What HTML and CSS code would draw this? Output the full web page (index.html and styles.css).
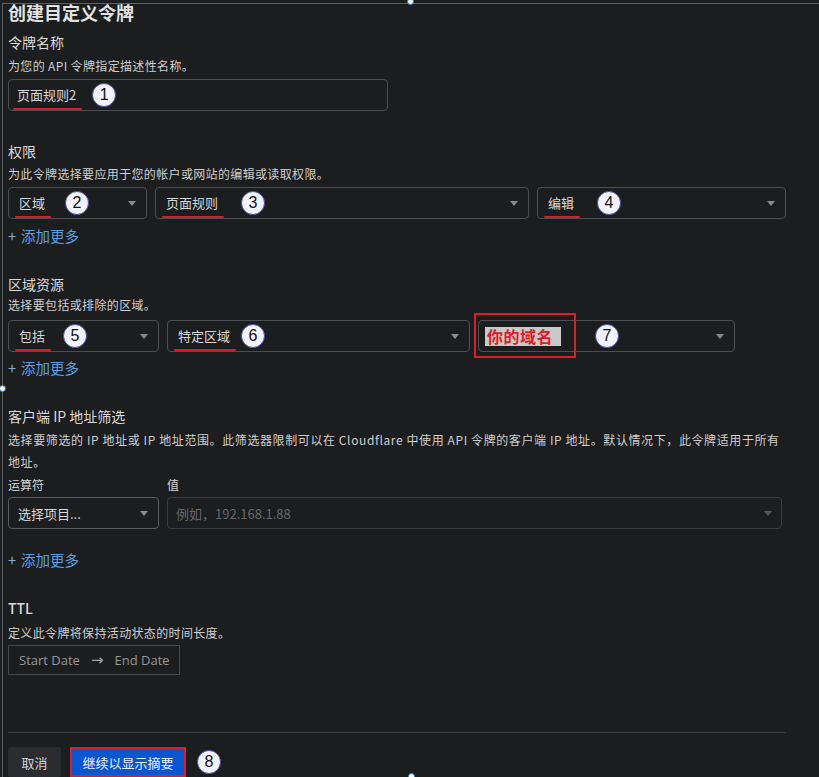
FILE: index.html
```html
<!DOCTYPE html>
<html lang="zh-CN">
<head>
<meta charset="utf-8">
<title>创建自定义令牌</title>
<link rel="stylesheet" href="styles.css">
</head>
<body>
<div class="frame"></div>
<span class="handle h-top"></span>
<span class="handle h-left"></span>
<span class="handle h-bottom"></span>
<main class="page">
  <h1 class="title">创建目定义令牌</h1>

  <h2 class="label">令牌名称</h2>
  <p class="desc">为您的 API 令牌指定描述性名称。</p>
  <div class="field input">
    <span class="mark">页面规则2</span><span class="ann g16">1</span>
  </div>

  <h2 class="label s-perm">权限</h2>
  <p class="desc d-perm">为此令牌选择要应用于您的帐户或网站的编辑或读取权限。</p>
  <div class="row row-perm">
    <div class="field select"><span class="mark">区域</span><span class="ann g20">2</span><i class="caret"></i></div>
    <div class="field select"><span class="mark">页面规则</span><span class="ann g23">3</span><i class="caret"></i></div>
    <div class="field select"><span class="mark">编辑</span><span class="ann g23">4</span><i class="caret"></i></div>
  </div>
  <div class="add add-perm"><span class="plus">+</span>添加更多</div>

  <h2 class="label s-zone">区域资源</h2>
  <p class="desc d-zone">选择要包括或排除的区域。</p>
  <div class="row row-zone">
    <div class="field select"><span class="mark">包括</span><span class="ann g18">5</span><i class="caret"></i></div>
    <div class="field select"><span class="mark">特定区域</span><span class="ann g11">6</span><i class="caret"></i></div>
    <div class="field select domain">
      <span class="redbox"></span>
      <span class="tag">你的域名</span><span class="ann g34">7</span><i class="caret"></i>
    </div>
  </div>
  <div class="add add-zone"><span class="plus">+</span>添加更多</div>

  <h2 class="label s-ip">客户端 IP 地址筛选</h2>
  <p class="desc d-ip">选择要筛选的 IP 地址或 IP 地址范围。此筛选器限制可以在 Cloudflare 中使用 API 令牌的客户端 IP 地址。默认情况下，此令牌适用于所有<br>地址。</p>
  <div class="row row-ip sublabels">
    <span>运算符</span><span>值</span>
  </div>
  <div class="row row-ip fields-ip">
    <div class="field select strong"><span>选择项目...</span><i class="caret"></i></div>
    <div class="field select disabled"><span class="ph">例如，192.168.1.88</span><i class="caret dim"></i></div>
  </div>
  <div class="add add-ip"><span class="plus">+</span>添加更多</div>

  <h2 class="label s-ttl">TTL</h2>
  <p class="desc d-ttl">定义此令牌将保持活动状态的时间长度。</p>
  <div class="daterange"><span>Start Date</span><span class="arrow">→</span><span>End Date</span></div>

  <hr class="sep">
  <div class="actions">
    <button class="btn cancel">取消</button>
    <button class="btn primary">继续以显示摘要</button>
    <span class="ann g11">8</span>
  </div>
</main>
</body>
</html>
```
FILE: styles.css
```css
* { box-sizing: border-box; }
html, body { margin: 0; padding: 0; }
body {
  background: #1c1d1f;
  color: #d6d6d6;
  font-family: "Noto Sans CJK SC", "Noto Sans", sans-serif;
  width: 819px;
  height: 777px;
  overflow: hidden;
  position: relative;
}
.frame {
  position: absolute;
  top: 3px; left: 2px; right: 0; bottom: 0;
  border-top: 1px solid #5f6063;
  border-left: 1px solid #5f6063;
  pointer-events: none;
}
.handle {
  position: absolute;
  width: 7px; height: 7px;
  border-radius: 50%;
  background: #fff;
  border: 1.5px solid #2f7ad8;
}
.h-top { left: 407px; top: -2px; }
.h-left { left: -1px; top: 385px; }
.h-bottom { left: 408px; top: 773px; }

.page { padding-left: 8px; width: 786px; }
.title {
  margin: 0;
  font-size: 18px;
  line-height: 24px;
  font-weight: 700;
  color: #e2e2e2;
}
.label {
  margin: 8px 0 0;
  font-size: 14px;
  line-height: 20px;
  font-weight: 400;
  color: #dadada;
}
.desc {
  margin: 5px 0 0;
  font-size: 12px;
  letter-spacing: 0.35px;
  line-height: 18px;
  color: #cfcfcf;
}
.field {
  height: 32px;
  border: 1px solid #4c4e52;
  border-radius: 4px;
  display: flex;
  align-items: center;
  font-size: 13px;
  color: #d8d8d8;
  padding: 0 10px;
  position: relative;
}
.input { margin-top: 4px; width: 380px; padding-left: 8px; }
.select .caret { margin-left: auto; }
.caret {
  width: 0; height: 0;
  border-left: 4px solid transparent;
  border-right: 4px solid transparent;
  border-top: 5px solid #8a8b8e;
  margin-right: 0;
}
.caret.dim { border-top-color: #55575a; }
.mark { position: relative; line-height: 18px; }
.mark::after {
  content: "";
  position: absolute;
  left: -4px; right: -6px; bottom: -6px;
  height: 2px;
  background: #d32030;
  border-radius: 1px;
}
.ann {
  width: 24px; height: 24px;
  border-radius: 50%;
  background: #f3f3ff;
  border: 1px solid #4b4fa8;
  color: #111;
  font-family: "Liberation Sans", Arial, sans-serif;
  font-size: 16px;
  line-height: 22px;
  text-align: center;
  flex: none;
}
.g11 { margin-left: 11px; }
.g16 { margin-left: 16px; }
.g18 { margin-left: 18px; }
.g20 { margin-left: 20px; }
.g23 { margin-left: 23px; }
.g34 { margin-left: 34px; }

.row { display: grid; column-gap: 8px; }
.row-perm { grid-template-columns: 139px 374px 249px; margin-top: 4px; }
.row-zone { grid-template-columns: 151px 303px 257px; margin-top: 6px; }
.row-ip { grid-template-columns: 151px 615px; }

.add {
  font-size: 14.5px;
  line-height: 20px;
  color: #5d9fe2;
}
.plus { color: #8aa9c9; margin-right: 5px; }
.add-perm { margin-top: 7px; }
.s-perm { margin-top: 30px; }
.d-perm { margin-top: 4px; }

.s-zone { margin-top: 28px; }
.d-zone { margin-top: 2px; }
.add-zone { margin-top: 6px; }

.domain { padding-left: 6px; }
.redbox {
  position: absolute;
  left: -5px; top: -8px;
  width: 102px; height: 45px;
  border: 2px solid #d62128;
}
.tag {
  background: #c9c9c9;
  color: #e01b24;
  font-weight: 700;
  font-size: 16px;
  line-height: 19px;
  height: 19px;
  padding: 0 8px 0 2px;
  letter-spacing: 0.5px;
}

.s-ip { margin-top: 28px; }
.d-ip { margin-top: 3px; line-height: 22px; white-space: nowrap; letter-spacing: 0.6px; }
.sublabels {
  margin-top: 3px;
  font-size: 12px;
  line-height: 18px;
  color: #d6d6d6;
}
.fields-ip { margin-top: 3px; }
.strong { border-color: #5a5c60; padding-left: 9px; }
.disabled { border-color: #3a3c3f; padding-left: 8px; padding-right: 9px; }
.ph { color: #66686c; }
.add-ip { margin-top: 21px; }

.s-ttl { margin-top: 28px; font-weight: 500; }
.d-ttl { margin-top: 6px; }
.daterange {
  margin-top: 3px;
  width: 172px; height: 30px;
  border: 1px solid #45474a;
  display: flex;
  align-items: center;
  padding-left: 10px;
  gap: 11px;
  font-family: "Open Sans", "Noto Sans", sans-serif;
  font-size: 13px;
  color: #95979b;
}
.arrow {
  font-family: "DejaVu Sans", sans-serif;
  font-size: 15px;
  line-height: 1;
  color: #a0a2a6;
}

.sep {
  margin: 57px 0 0;
  width: 778px;
  border: 0;
  height: 1px;
  background: #3b3d40;
}
.actions {
  margin-top: 14px;
  display: flex;
  align-items: center;
}
.btn {
  height: 30px;
  font-family: "Noto Sans CJK SC", sans-serif;
  font-size: 13px;
  border-radius: 3px;
  padding: 0;
}
.cancel {
  width: 53px;
  background: #2a2c2f;
  color: #d2d2d2;
  border: 0;
}
.primary {
  margin-left: 9px;
  width: 116px;
  background: #0a56cf;
  color: #e8eefc;
  border: 2px solid #d32131;
  border-radius: 0;
}
```
